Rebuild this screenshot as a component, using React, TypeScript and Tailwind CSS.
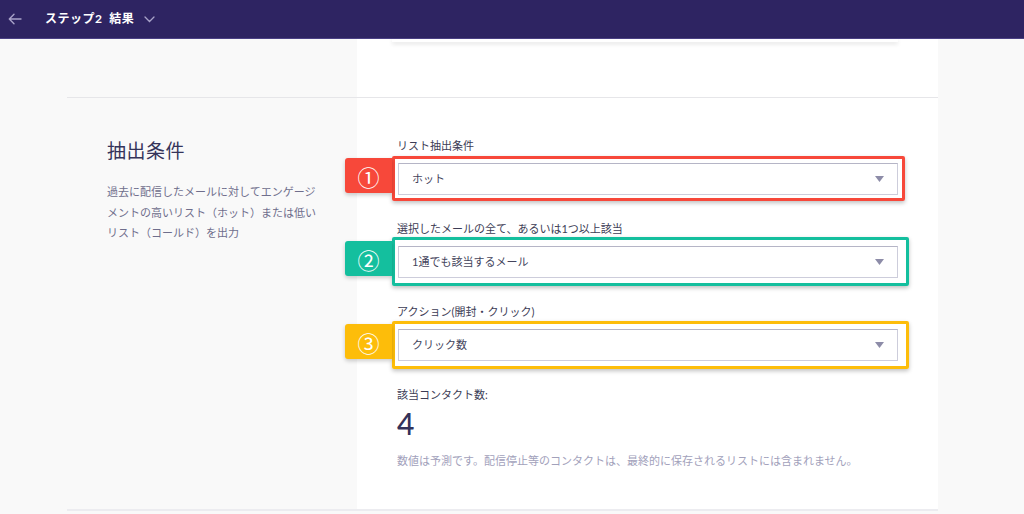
import React from "react";

type Field = {
  label: string;
  value: string;
  mark: string;
  color: string;
  frame: string;
};

const fields: Field[] = [
  { label: "リスト抽出条件", value: "ホット", mark: "①", color: "bg-[#f7483a]", frame: "border-[#f7483a] -top-[7px] -bottom-[6px] -right-[7px]" },
  { label: "選択したメールの全て、あるいは1つ以上該当", value: "1通でも該当するメール", mark: "②", color: "bg-[#14bf9e]", frame: "border-[#14bf9e] -top-[9px] -bottom-[8px] -right-[11px]" },
  { label: "アクション(開封・クリック)", value: "クリック数", mark: "③", color: "bg-[#fdbd0a]", frame: "border-[#fdbd0a] -top-[8px] -bottom-[8px] -right-[11px]" },
];

const SelectBox = ({ field }: { field: Field }) => (
  <div className="relative w-[500px]">
    {/* annotation overlay */}
    <div className={`absolute -left-[6px] ${field.frame} border-[3px] rounded-[2px] shadow-[0_2px_4px_rgba(0,0,0,0.25)] pointer-events-none`} />
    <div className={`absolute -left-[53px] top-[-5px] h-[35px] w-[47px] ${field.color} rounded-l-[3px] shadow-[0_2px_4px_rgba(0,0,0,0.2)] flex items-center justify-center text-white text-[22px] leading-none font-['Noto_Sans_CJK_JP',sans-serif]`}>
      {field.mark}
    </div>
    <div className="relative h-[32px] bg-white border border-[#cdcddb] border-t-[#b5b5c6] flex items-center justify-between pl-[13px] pr-[13px] text-[11px] text-[#44445c]">
      <span>{field.value}</span>
      <svg width="9" height="6" viewBox="0 0 9 6"><path d="M0 0h9L4.5 6z" fill="#8d8ca8" /></svg>
    </div>
  </div>
);

export default function App() {
  return (
    <div className="min-h-[514px] bg-[#f9f9f9] font-['Lato','Noto_Sans_CJK_JP',sans-serif] overflow-hidden">
      <header className="h-[39px] bg-[#2e2462] border-b border-[#4b4185] flex items-center text-white">
        <svg className="ml-[8px]" width="14" height="12" viewBox="0 0 14 12" fill="none" stroke="#a9a3c9" strokeWidth="1.4" strokeLinecap="round" strokeLinejoin="round">
          <path d="M13 6H1.5M6 1.3L1.3 6 6 10.7" />
        </svg>
        <span className="ml-[23px] text-[12px] font-bold tracking-[0.5px]">ステップ2&nbsp;&nbsp;結果</span>
        <svg className="ml-[10px]" width="11" height="7" viewBox="0 0 11 7" fill="none" stroke="#a9a3c9" strokeWidth="1.3" strokeLinecap="round">
          <path d="M1 1l4.5 4.5L10 1" />
        </svg>
      </header>

      <div className="ml-[67px] w-[871px]">
        <div className="flex h-[59px] border-b border-[#e6e6e9]">
          <div className="w-[290px]" />
          <div className="w-[581px] bg-white">
            <div className="ml-[35px] w-[506px] h-[3px] bg-white shadow-[0_2px_4px_rgba(0,0,0,0.12)]" />
          </div>
        </div>

        <div className="flex h-[413px] border-b-2 border-[#ececf0]">
          <div className="w-[290px] pl-[40px] pt-[39px]">
            <h2 className="text-[19px] leading-[28px] text-[#35345a] tracking-[0.5px]">抽出条件</h2>
            <p className="mt-[17px] w-[214px] text-[11px] leading-[20.5px] text-[#6f6e8c]">
              過去に配信したメールに対してエンゲージメントの高いリスト（ホット）または低いリスト（コールド）を出力
            </p>
          </div>
          <div className="w-[581px] bg-white pl-[41px] pt-[39px]">
            {fields.map((f) => (
              <div key={f.label} className="mb-[25px]">
                <div className="text-[11px] leading-[18px] text-[#3c3c55] -ml-[1px] mb-[8px]">{f.label}</div>
                <SelectBox field={f} />
              </div>
            ))}
            <div className="-ml-[1px] mt-[1px] text-[11px] leading-[18px] text-[#3c3c55]">該当コンタクト数:</div>
            <div className="-ml-[1px] mt-[2px] text-[30px] leading-[34px] font-medium text-[#33325a]">4</div>
            <div className="-ml-[1px] mt-[12px] text-[11px] leading-[18px] text-[#a2a1bb]">
              数値は予測です。配信停止等のコンタクトは、最終的に保存されるリストには含まれません。
            </div>
          </div>
        </div>
      </div>
    </div>
  );
}
